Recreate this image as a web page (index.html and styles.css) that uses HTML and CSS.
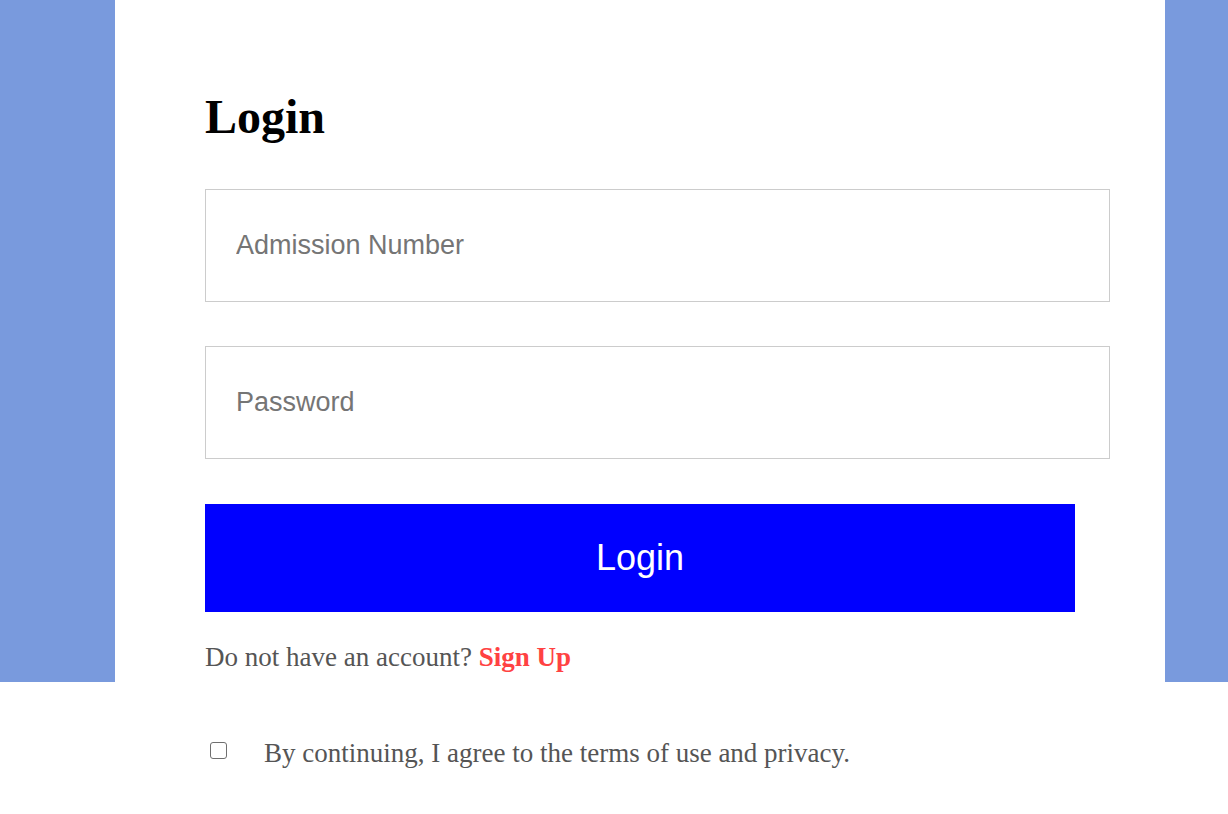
FILE: index.html
```html
<!DOCTYPE html>
<html lang="en">
<head>
<meta charset="utf-8">
<title>Login</title>
<link rel="stylesheet" href="styles.css">
</head>
<body>
<div class="backdrop">
  <div class="card">
    <h1 class="title">Login</h1>
    <form class="login-form">
      <input class="field field-first" type="text" placeholder="Admission Number">
      <input class="field field-second" type="password" placeholder="Password">
      <button class="submit" type="button">Login</button>
    </form>
    <p class="signup-line">Do not have an account? <a class="signup-link" href="#">Sign Up</a></p>
    <label class="terms">
      <input class="terms-check" type="checkbox">
      <span class="terms-text">By continuing, I agree to the terms of use and privacy.</span>
    </label>
  </div>
</div>
</body>
</html>
```

FILE: styles.css
```css
html, body {
  margin: 0;
  padding: 0;
  background: #ffffff;
}

body {
  font-family: "Liberation Serif", "Times New Roman", serif;
}

.backdrop {
  min-height: 814px;
  background-color: #ffffff;
  background-image: linear-gradient(#799add, #799add);
  background-repeat: no-repeat;
  background-size: 100% 682px;
  padding-left: 115px;
  box-sizing: border-box;
}

.card {
  width: 1050px;
  box-sizing: border-box;
  background: #ffffff;
  padding: 90px 0 40px 90px;
}

.title {
  margin: 0;
  font-size: 48px;
  line-height: 53px;
  font-weight: bold;
  color: #000000;
}

.login-form {
  margin: 0;
  display: flex;
  flex-direction: column;
  align-items: flex-start;
}

.field {
  display: block;
  width: 905px;
  height: 113px;
  box-sizing: border-box;
  border: 1px solid #cccccc;
  padding: 0 30px;
  margin: 0;
  font-family: "Liberation Sans", Arial, sans-serif;
  font-size: 27px;
  color: #333333;
  background: #ffffff;
  outline: none;
}

.field::placeholder {
  color: #757575;
}

.field-first {
  margin-top: 46px;
}

.field-second {
  margin-top: 44px;
}

.submit {
  margin-top: 45px;
  width: 870px;
  height: 108px;
  border: none;
  background: #0000ff;
  color: #ffffff;
  font-family: "Liberation Sans", Arial, sans-serif;
  font-size: 36px;
  padding: 0;
  cursor: pointer;
}

.signup-line {
  margin: 30px 0 0 0;
  font-size: 27px;
  line-height: 30px;
  color: #555555;
}

.signup-link {
  color: #ff4242;
  font-weight: bold;
  text-decoration: none;
}

.terms {
  display: flex;
  align-items: flex-start;
  margin-top: 66px;
}

.terms-check {
  appearance: none;
  -webkit-appearance: none;
  width: 17px;
  height: 17px;
  margin: 4px 37px 0 5px;
  border: 1px solid #6f6f6f;
  border-radius: 3px;
  background: #ffffff;
  box-sizing: border-box;
  flex: none;
}

.terms-text {
  font-size: 27px;
  line-height: 30px;
  color: #555555;
}
```
